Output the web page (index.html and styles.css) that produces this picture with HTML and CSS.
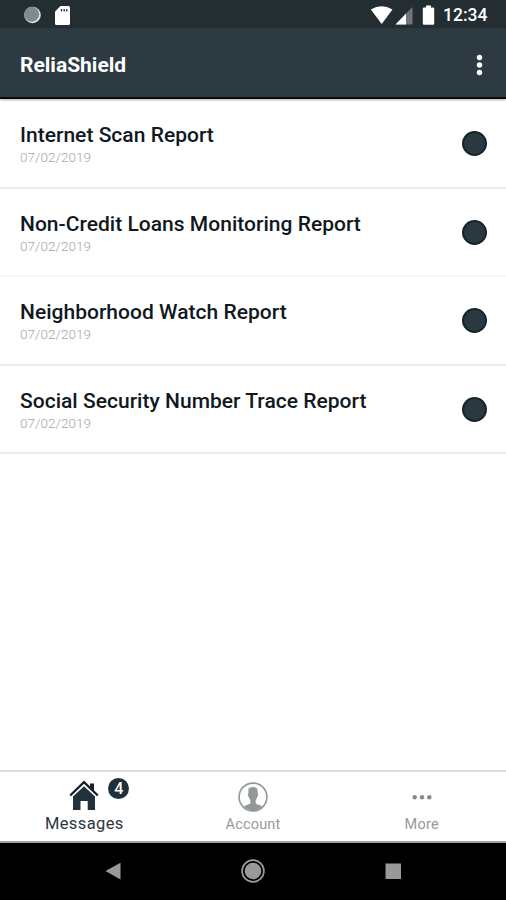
FILE: index.html
```html
<!DOCTYPE html>
<html lang="en">
<head>
<meta charset="utf-8">
<title>ReliaShield</title>
<link rel="stylesheet" href="styles.css">
</head>
<body>
<div class="screen">
  <div class="status">
    <svg class="status-left" width="60" height="29" viewBox="0 0 60 29">
      <circle cx="12.5" cy="15" r="8.3" fill="#dfe3e4"/>
      <circle cx="11.7" cy="14.2" r="7.5" fill="#7f8b8d"/>
      <path d="M40.500 6h8q1.500 0 1.500 1.500v16q0 1.500-1.500 1.500h-12q-1.500 0-1.500-1.500V11.500z" fill="#fff"/>
      <path d="M41.500 9v2.500M44.200 9v2.500M46.800 9v2.500" stroke="#263238" stroke-width="1.300"/>
    </svg>
    <svg class="status-right" width="70" height="29" viewBox="0 0 70 29">
      <path d="M.8 9.600Q11.500 2.700 22.500 9.600L11.700 24z" fill="#fff"/>
      <path d="M42.500 7v17.500H25.500z" fill="#6c767b"/>
      <path d="M36 13.500v11H25.500z" fill="#fff"/>
      <path d="M56 5.500h5v2h2q1.200 0 1.200 1.200v14.600q0 1.500-1.200 1.500h-9q-1.200 0-1.200-1.500V8.700q0-1.200 1.200-1.200h2z" fill="#fff"/>
    </svg>
    <span class="clock">12:34</span>
  </div>
  <header class="appbar">
    <h1>ReliaShield</h1>
    <svg width="8" height="24" viewBox="0 0 8 24" fill="#fff"><circle cx="4.500" cy="4.500" r="2.700"/><circle cx="4.500" cy="12" r="2.700"/><circle cx="4.500" cy="19.500" r="2.700"/></svg>
  </header>
  <main class="list">
    <div class="row"><div><h2>Internet Scan Report</h2><p>07/02/2019</p></div><i class="dot"></i></div>
    <div class="row faint"><div><h2>Non-Credit Loans Monitoring Report</h2><p>07/02/2019</p></div><i class="dot"></i></div>
    <div class="row"><div><h2>Neighborhood Watch Report</h2><p>07/02/2019</p></div><i class="dot"></i></div>
    <div class="row"><div><h2>Social Security Number Trace Report</h2><p>07/02/2019</p></div><i class="dot"></i></div>
  </main>
  <nav class="tabs">
    <div class="tab active">
      <div class="icon">
        <svg width="30" height="32" viewBox="0 0 30 32">
          <path d="M21 3.500h4v8.500l-4-4z" fill="#17242b"/>
          <path d="M1.200 15.500L15 2.200 28.800 15.500" fill="none" stroke="#17242b" stroke-width="2.400"/>
          <path d="M4 16.500L15 6.200 26 16.500V30h-7.300v-9h-7.200v9H4z" fill="#22323a"/>
        </svg>
        <span class="badge">4</span>
      </div>
      <span class="label">Messages</span>
    </div>
    <div class="tab">
      <div class="icon">
        <svg width="30" height="32" viewBox="0 0 30 32">
          <circle cx="15" cy="17" r="13.900" fill="none" stroke="#929797" stroke-width="1.600"/>
          <path d="M10.500 8.500Q12 6.900 15 7q4.700 0 4.700 4.500v2.200q.8.700.1 2.300l-.7 1.200q-.4 1.800-1.400 2.800v3q.3 1 2.300 1.600l4.100 1.700Q20.500 30.400 15 30.400T5.900 26.300L10 24.600q2-.6 2.300-1.600v-3q-1-1-1.400-2.800l-.7-1.200q-.7-1.600.1-2.300z" fill="#929797"/>
        </svg>
      </div>
      <span class="label">Account</span>
    </div>
    <div class="tab">
      <div class="icon">
        <svg width="30" height="32" viewBox="0 0 30 32" fill="#888"><circle cx="7.700" cy="17.200" r="2.200"/><circle cx="15" cy="17.200" r="2.200"/><circle cx="22.300" cy="17.200" r="2.200"/></svg>
      </div>
      <span class="label">More</span>
    </div>
  </nav>
  <footer class="sysnav">
    <svg width="26" height="26" viewBox="0 0 26 26"><path d="M5.500 13L20.500 4.700v16.800z" fill="#999"/></svg>
    <svg width="26" height="26" viewBox="0 0 26 26"><circle cx="13" cy="13" r="10.900" fill="none" stroke="#999" stroke-width="1.700"/><circle cx="13" cy="13" r="8.300" fill="#999"/></svg>
    <svg width="26" height="26" viewBox="0 0 26 26"><path d="M5.500 5.500h15.500v15.500H5.500z" fill="#999"/></svg>
  </footer>
</div>
</body>
</html>
```

FILE: styles.css
```css
* { box-sizing: border-box; }
body, h1, h2, p { margin: 0; }
body { font-family: Roboto, "Liberation Sans", sans-serif; background: #fff; }
svg { display: block; }
.screen { width: 506px; height: 900px; display: flex; flex-direction: column; overflow: hidden; }
.status { height: 29px; background: #232d32; display: flex; align-items: center; padding: 0 18px 0 20px; color: #fff; flex: none; }
.status-right { margin-left: auto; }
.clock { width: 48px; padding-left: 3px; font-size: 17.5px; font-weight: 500; line-height: 29px; padding-top: 2px; white-space: nowrap; }
.appbar { height: 70px; flex: none; background: #2d3a42; border-bottom: 2px solid #070b0e; box-shadow: 0 1px 2px #aaa; display: flex; align-items: center; justify-content: space-between; padding: 4px 23px 0 20px; color: #fff; }
.appbar h1 { font-size: 21px; font-weight: 700; line-height: 26px; letter-spacing: 0; }
.list { flex: 1; padding-top: 1px; }
.row { height: 88.6px; border-bottom: 2px solid #ececee; display: flex; justify-content: space-between; padding: 22px 19px 0 20px; }
.row.faint { border-color: #f6f6f6; }
.row h2 { font-size: 21px; line-height: 26px; font-weight: 500; letter-spacing: .02px; color: #10191f; white-space: nowrap; }
.row p { font-size: 13.5px; line-height: 18px; color: #a6a6a6; font-weight: 300; letter-spacing: .05px; }
.dot { width: 25px; height: 25px; border-radius: 50%; background: #2a3941; border: 2px solid #17242b; margin-top: 9px; }
.tabs { height: 73px; flex: none; border-top: 2px solid #dedede; border-bottom: 2px solid #a3a3a3; display: flex; }
.tab { flex: 1; display: flex; flex-direction: column; align-items: center; padding-top: 8px; color: #999; }
.icon { position: relative; width: 30px; height: 32px; }
.badge { position: absolute; left: 39px; top: -2px; width: 21px; height: 21px; border-radius: 50%; background: #20303a; color: #fff; font-size: 16px; line-height: 21px; font-weight: 500; text-align: center; }
.label { font-size: 14.5px; line-height: 22px; padding-top: 2px; letter-spacing: .2px; }
.active .label { font-size: 16.5px; line-height: 20px; color: #2b363c; letter-spacing: .4px; }
.sysnav { height: 57px; flex: none; background: #000; display: flex; justify-content: space-between; align-items: center; padding: 0 100px 2px; }
```
